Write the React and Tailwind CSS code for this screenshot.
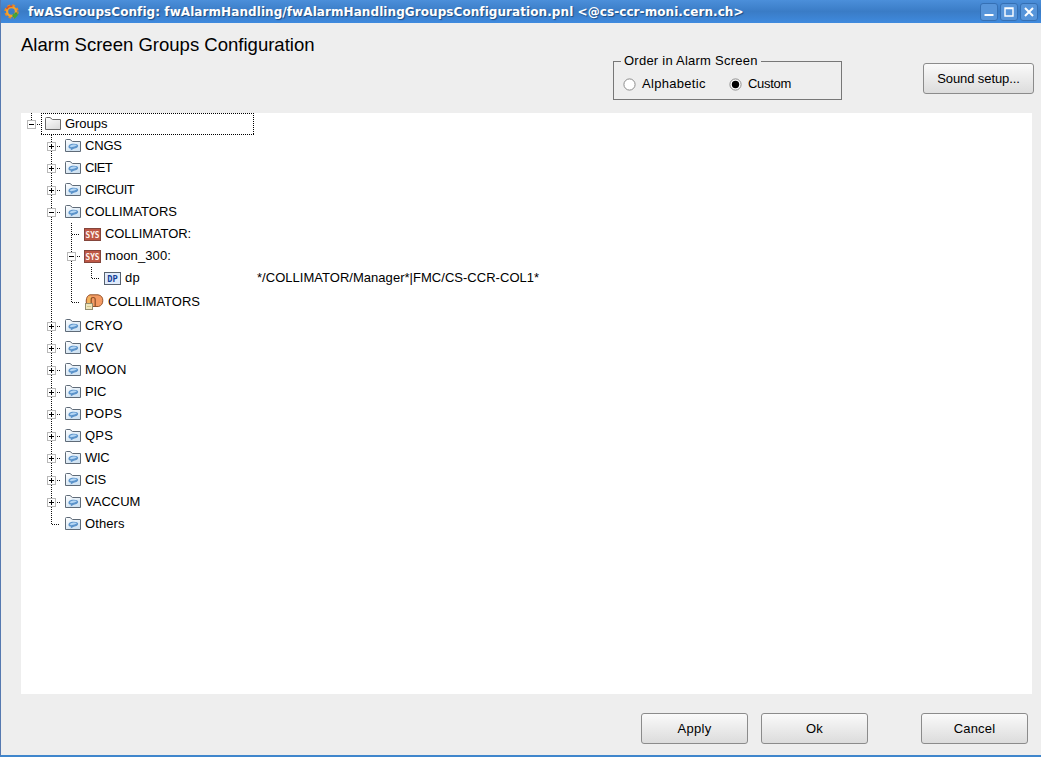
import React from "react";

/* Rows: kind of guide in each 20px column, then icon and label.
   v = blank, line = through line, t = branch, l = last branch, p/m = expander box */
const rows = [
  { guides: ["v", "p"], icon: "folder", label: "CNGS", track: "tracking-[-0.2px]" },
  { guides: ["v", "p"], icon: "folder", label: "CIET", track: "tracking-[-0.6px]" },
  { guides: ["v", "p"], icon: "folder", label: "CIRCUIT", track: "tracking-[-0.5px]" },
  { guides: ["v", "m"], icon: "folder", label: "COLLIMATORS" },
  { guides: ["v", "line", "t"], icon: "sys", label: "COLLIMATOR:", track: "tracking-[-0.08px]" },
  { guides: ["v", "line", "m"], icon: "sys", label: "moon_300:", track: "tracking-[0.1px]" },
  { guides: ["v", "line", "line", "l"], icon: "dp", label: "dp", track: "tracking-[0.3px]", value: "*/COLLIMATOR/Manager*|FMC/CS-CCR-COL1*" },
  { guides: ["v", "line", "l"], icon: "alert", label: "COLLIMATORS", tall: true },
  { guides: ["v", "p"], icon: "folder", label: "CRYO", track: "tracking-[0.1px]" },
  { guides: ["v", "p"], icon: "folder", label: "CV" },
  { guides: ["v", "p"], icon: "folder", label: "MOON", track: "tracking-[0.3px]" },
  { guides: ["v", "p"], icon: "folder", label: "PIC", track: "tracking-[-0.2px]" },
  { guides: ["v", "p"], icon: "folder", label: "POPS", track: "tracking-[0.3px]" },
  { guides: ["v", "p"], icon: "folder", label: "QPS", track: "tracking-[0.2px]" },
  { guides: ["v", "p"], icon: "folder", label: "WIC", track: "tracking-[-0.3px]" },
  { guides: ["v", "p"], icon: "folder", label: "CIS", track: "tracking-[-0.3px]" },
  { guides: ["v", "p"], icon: "folder", label: "VACCUM" },
  { guides: ["v", "l"], icon: "folder", label: "Others", track: "tracking-[0.1px]" },
];

function Guide({ kind, h }) {
  if (kind === "v") return <span className="w-5 shrink-0" />;
  const mid = h / 2;
  const box = kind === "p" || kind === "m" || kind === "root";
  const bottom = kind === "l" || kind === "root" ? mid : h;
  return (
    <svg width="20" height={h} className="shrink-0" shapeRendering="crispEdges">
      <path d={`M10.5 0V${bottom}`} stroke="#111" strokeDasharray="1 1" />
      {kind !== "line" && (
        <path d={`M${box ? 16 : 11} ${mid + 0.5}H19`} stroke="#111" strokeDasharray="1 1" />
      )}
      {box && (
        <>
          <rect x="6.5" y={mid - 3.5} width="8" height="8" fill="#fff" stroke="#b8b8b8" />
          <path d={`M8 ${mid + 0.5}h5`} stroke="#000" />
          {kind === "p" && <path d={`M10.5 ${mid - 2}v5`} stroke="#000" />}
        </>
      )}
    </svg>
  );
}

function Folder({ marked }) {
  return (
    <svg width="16" height="14" viewBox="0 0 16 14" className="shrink-0">
      <defs>
        <linearGradient id={marked ? "fm" : "fp"} x1="0" y1="0" x2="0.6" y2="1">
          <stop offset="0" stopColor="#fff" />
          <stop offset="1" stopColor={marked ? "#cfe2f2" : "#dedede"} />
        </linearGradient>
      </defs>
      <path
        d="M.5 12.5V1.5Q.5 .5 1.5 .5H5L7.5 2.5H15.5V12.5Z"
        fill={marked ? "url(#fm)" : "url(#fp)"}
        stroke={marked ? "#5f6b78" : "#6b6b6b"}
      />
      {marked && (
        <>
          <path d="M3.4 8Q3.6 5.4 7 4.8Q12.8 4.2 13.2 6.8Q13 9.2 8.8 9.8L5.6 11.4L6 9.8Q3.5 9.6 3.4 8Z" fill="#5b93ca" />
          <path d="M4.6 7.6Q5.2 5.9 8.2 5.5Q11.8 5.2 11.8 6.6Q10 7.9 6.2 8.2Z" fill="#b4d6f4" />
        </>
      )}
    </svg>
  );
}

function Badge({ text, size, fill, border, ink }) {
  return (
    <svg width="17" height="13" viewBox="0 0 17 13" className="-ml-px shrink-0">
      <rect x=".5" y=".5" width="16" height="12" fill={fill} stroke={border} />
      <text
        x="8.5"
        y="9.6"
        textAnchor="middle"
        textLength={text.length === 3 ? 14 : 10.5}
        lengthAdjust="spacingAndGlyphs"
        className="font-['DejaVu_Sans_Mono',monospace] font-bold"
        fontSize={size}
        fill={ink}
      >
        {text}
      </text>
    </svg>
  );
}

function Alert() {
  return (
    <svg width="19" height="17" viewBox="0 0 19 17" className="shrink-0">
      <path d="M5 .8H13Q17.8 1.6 17.8 6.5Q17.8 11.4 13.5 12.5H6Q1 12 1.2 7Q1.5 1.6 5 .8Z" fill="#f39a63" stroke="#96542a" />
      <path d="M2 7Q2.6 2 5.5 1.8Q7 3.5 6 10H2.5Z" fill="#f2b45c" />
      <path d="M6.2 9.5V5.5Q6.2 3.5 8.2 3.5Q10.2 3.5 10.2 5.5V12.5" fill="none" stroke="#8d4d25" strokeWidth="1.2" />
      <rect x=".5" y="9.5" width="7" height="6" fill="#efe6bd" stroke="#938e70" />
      <path d="M2 12.5H6" stroke="#d2c68c" />
    </svg>
  );
}

const icons = {
  folder: <Folder marked />,
  sys: <Badge text="SYS" size="8.5" fill="#bd5745" border="#84453b" ink="#fff3ec" />,
  dp: <Badge text="DP" size="8.5" fill="#e0ebfb" border="#57616e" ink="#123f98" />,
  alert: <Alert />,
};

function TreeRow({ row }) {
  const h = row.tall ? 26 : 22;
  return (
    <div className={`flex items-center ${row.tall ? "h-[26px]" : "h-[22px]"}`}>
      <div className="flex w-[236px] items-center">
        {row.guides.map((g, i) => (
          <Guide key={i} kind={g} h={h} />
        ))}
        <span className="ml-1 flex">{icons[row.icon]}</span>
        <span className={`ml-1 whitespace-nowrap pb-0.5 ${row.track || ""}`}>{row.label}</span>
      </div>
      {row.value && <span className="whitespace-nowrap pb-0.5 tracking-[0.03px]">{row.value}</span>}
    </div>
  );
}

function Button({ children, className }) {
  return (
    <button
      className={`h-[31px] rounded-[3px] border border-[#8b8b8b] bg-linear-to-b from-[#fafafa] to-[#dcdcdc] pb-px text-center ${className}`}
    >
      {children}
    </button>
  );
}

function WindowButton({ children }) {
  return (
    <span className="flex h-[18px] w-[18px] items-center justify-center rounded-[3px] border border-[#3570b4] bg-[#5795da]">
      <svg width="12" height="12" viewBox="0 0 12 12" fill="none" stroke="#fff">
        {children}
      </svg>
    </span>
  );
}

function Gear() {
  return (
    <svg width="16" height="16" viewBox="0 0 16 16" fill="none">
      <circle cx="7.5" cy="7.5" r="6" stroke="#e88a27" strokeWidth="2.4" strokeDasharray="2.7 2.01" />
      <circle cx="7.5" cy="7.5" r="4.4" stroke="#f3a32e" strokeWidth="2.2" />
      <path d="M2.6 5Q4.5 1.8 8.5 2.4" stroke="#dc5426" strokeWidth="1.6" />
      <path d="M8.5 12.3Q12 12 12.3 8.5" stroke="#3c9a36" strokeWidth="2.6" />
      <path d="M8.5 9.5L14.5 10.5L10.5 15Z" fill="#43a53d" />
    </svg>
  );
}

function Radio({ checked, children, className, track }) {
  return (
    <label className={`flex items-center ${className || ""}`}>
      <svg width="13" height="13" viewBox="0 0 13 13">
        <circle cx="6.5" cy="6.5" r="5.6" fill="#fff" stroke="#8c8c8c" />
        {checked && <circle cx="6.5" cy="6.5" r="3.7" fill="#000" />}
      </svg>
      <span className={`ml-1.5 pb-px ${track}`}>{children}</span>
    </label>
  );
}

export default function App() {
  return (
    <div className="flex h-[757px] w-[1041px] flex-col overflow-hidden border-b-2 border-l border-b-[#3f86cc] border-l-[#5579b0] bg-[#eeeeee] font-['Liberation_Sans',Arial,sans-serif] text-[13px] leading-[15px] text-black">
      <header className="-ml-px flex h-[23px] shrink-0 items-center bg-linear-to-b from-[#4b8fda] via-[#3a7cc6] to-[#3f8ade] pl-1 pr-[3px]">
        <Gear />
        <h1 className="ml-2 flex-1 whitespace-nowrap pt-0.5 font-['DejaVu_Sans',sans-serif] text-[12px] font-bold tracking-[0.075px] text-white [text-shadow:1px_1px_1px_#1d4a80]">
          fwASGroupsConfig: fwAlarmHandling/fwAlarmHandlingGroupsConfiguration.pnl &lt;@cs-ccr-moni.cern.ch&gt;
        </h1>
        <div className="flex gap-0.5">
          <WindowButton>
            <path d="M1.5 9H10.5" strokeWidth="2" />
          </WindowButton>
          <WindowButton>
            <path d="M2 2V10H10V2ZM1.5 2.5H10.5" strokeWidth="1.4" />
          </WindowButton>
          <WindowButton>
            <path d="M2 2L10 10M10 2L2 10" strokeWidth="2" />
          </WindowButton>
        </div>
      </header>

      <section className="flex h-[90px] shrink-0 items-start pl-5 pr-[7px]">
        <h2 className="mt-3 w-[592px] whitespace-nowrap text-[18.55px] leading-[20px]">Alarm Screen Groups Configuration</h2>
        <fieldset className="mt-[30px] h-[47px] w-[229px] border border-[#777] pl-[9px]">
          <legend className="-ml-0.5 h-4 px-[3px] tracking-[0.24px]">Order in Alarm Screen</legend>
          <div className="mt-[7px] flex">
            <Radio className="w-[106px]" track="tracking-[0.3px]">Alphabetic</Radio>
            <Radio checked track="tracking-[-0.3px]">Custom</Radio>
          </div>
        </fieldset>
        <Button className="ml-auto mt-[40px] w-[111px] tracking-[-0.1px]">Sound setup...</Button>
      </section>

      <main className="ml-5 h-[581px] w-[1011px] shrink-0 bg-white">
        <div className="flex h-[22px] items-center">
          <Guide kind="root" h={22} />
          <div className="relative flex h-[22px] w-[213px] items-center pl-1">
            <svg width="213" height="22" className="absolute inset-0" fill="none" shapeRendering="crispEdges">
              <path d="M0 .5H213M0 21.5H213M.5 0V22M212.5 0V22" stroke="#000" strokeDasharray="1 1" />
            </svg>
            <Folder />
            <span className="ml-1 pb-0.5 tracking-[-0.05px]">Groups</span>
          </div>
        </div>
        {rows.map((row, i) => (
          <TreeRow key={i} row={row} />
        ))}
      </main>

      <footer className="flex pl-[640px] pt-[19px]">
        <Button className="w-[107px] tracking-[0.3px]">Apply</Button>
        <Button className="ml-[13px] w-[107px] tracking-[0.3px]">Ok</Button>
        <Button className="ml-[53px] w-[107px] tracking-[0.15px]">Cancel</Button>
      </footer>
    </div>
  );
}
